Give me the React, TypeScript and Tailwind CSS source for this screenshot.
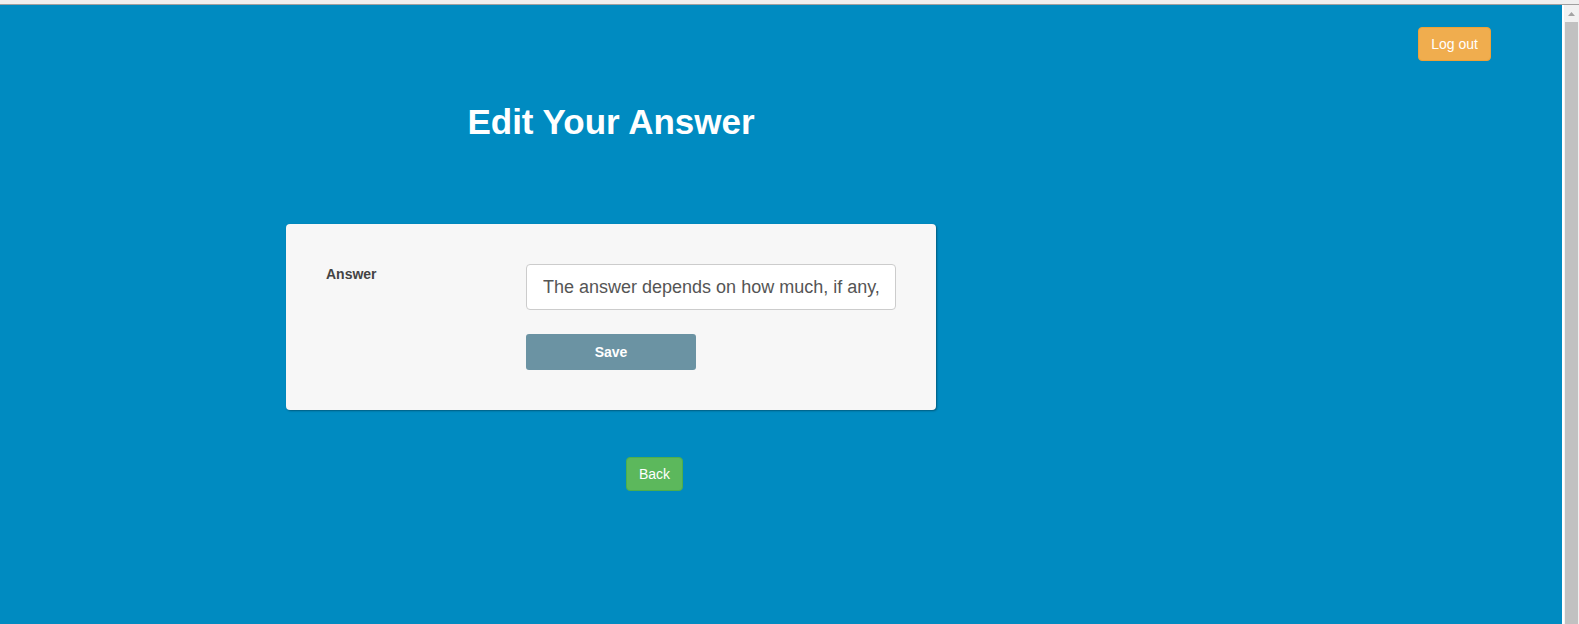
const EditAnswer = () => {
  return (
    <div className="flex-1 bg-[#008bc1] font-['Liberation_Sans',Arial,sans-serif]">
      {/* top bar with log out */}
      <div className="flex justify-end pt-[22px] pr-[71px]">
        <button className="h-[34px] px-3 rounded border border-[#eea236] bg-[#f0ad4e] text-sm leading-5 text-white">
          Log out
        </button>
      </div>

      <div className="ml-[286px] w-[650px]">
        <h1 className="mt-[41px] text-center text-[35px] leading-[40px] font-bold text-white">
          Edit Your Answer
        </h1>

        <div className="mt-[82px] rounded-sm bg-[#f7f7f7] p-10 shadow-[1px_1px_2px_rgba(0,0,0,0.35)]">
          <div className="grid grid-cols-[200px_370px]">
            <label className="text-sm leading-5 font-bold text-[#444]">Answer</label>
            <div className="flex flex-col gap-6">
              <input
                type="text"
                defaultValue="The answer depends on how much, if any, of the cost you are able to cover yourself."
                className="h-[46px] w-full rounded border border-[#ccc] bg-white px-4 text-lg text-[#555] outline-none"
              />
              <button className="h-9 w-[170px] rounded-[3px] bg-[#6b93a3] text-sm font-bold text-white">
                Save
              </button>
            </div>
          </div>
        </div>

        <div className="mt-[47px] pl-[340px]">
          <button className="h-[34px] px-3 rounded border border-[#4cae4c] bg-[#5cb85c] text-sm leading-5 text-white">
            Back
          </button>
        </div>
      </div>
    </div>
  );
};

const Scrollbar = () => (
  <div className="flex w-[17px] flex-col border-l-2 border-white bg-[#f1f1f1]">
    <div className="flex h-[17px] items-center justify-center">
      <svg width="7" height="4" viewBox="0 0 7 4">
        <path d="M3.5 0 L7 4 L0 4 Z" fill="#a3a3a3" />
      </svg>
    </div>
    <div className="mx-[1px] flex-1 bg-[#c1c1c1]" />
  </div>
);

export default function App() {
  return (
    <div className="flex h-[624px] flex-col overflow-hidden">
      <div className="h-[5px] border-b border-[#a0a0a0] bg-[#efefef]" />
      <div className="flex flex-1">
        <EditAnswer />
        <Scrollbar />
      </div>
    </div>
  );
}
